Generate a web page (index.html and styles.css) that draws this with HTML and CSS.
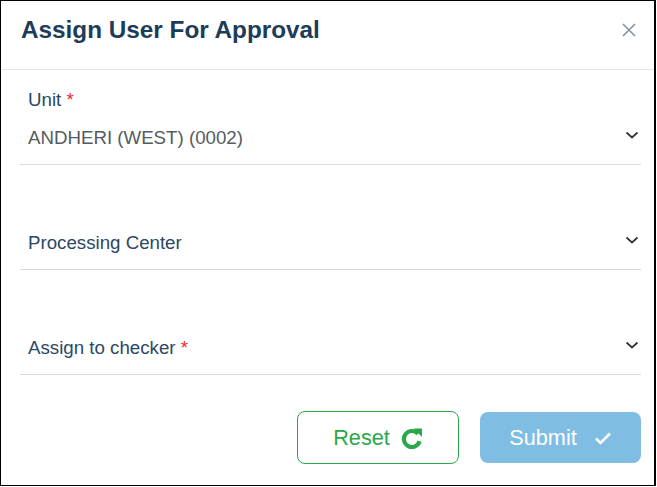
FILE: index.html
```html
<!DOCTYPE html>
<html>
<head>
<meta charset="utf-8">
<link rel="stylesheet" href="styles.css">
</head>
<body>
<div class="dialog">
  <div class="header">
    <h1 class="title">Assign User For Approval</h1>
    <button class="close" aria-label="Close">
      <svg width="16" height="16" viewBox="0 0 16 16"><path d="M2 2 L14 14 M14 2 L2 14" stroke="#8593a0" stroke-width="1.6" fill="none"/></svg>
    </button>
  </div>
  <div class="body">
    <div class="field">
      <div class="label">Unit <span class="req">*</span></div>
      <div class="row">
        <span class="value">ANDHERI (WEST) (0002)</span>
        <svg class="chev" width="14" height="10" viewBox="0 0 14 10"><path d="M1.5 2.5 L7 7.5 L12.5 2.5" stroke="#333" stroke-width="1.7" fill="none"/></svg>
      </div>
    </div>
    <div class="field">
      <div class="row">
        <span class="label">Processing Center</span>
        <svg class="chev" width="14" height="10" viewBox="0 0 14 10"><path d="M1.5 2.5 L7 7.5 L12.5 2.5" stroke="#333" stroke-width="1.7" fill="none"/></svg>
      </div>
    </div>
    <div class="field">
      <div class="row">
        <span class="label">Assign to checker <span class="req">*</span></span>
        <svg class="chev" width="14" height="10" viewBox="0 0 14 10"><path d="M1.5 2.5 L7 7.5 L12.5 2.5" stroke="#333" stroke-width="1.7" fill="none"/></svg>
      </div>
    </div>
  </div>
  <div class="footer">
    <button class="btn reset">Reset
      <svg width="22" height="22" viewBox="0 0 22 22"><path d="M17 6.8 A8 8 0 1 0 18.6 14.2" stroke="#2aa84a" stroke-width="4.2" fill="none"/><path d="M12.5 1.5 L21 1.5 L21 10 Z" fill="#2aa84a"/></svg>
    </button>
    <button class="btn submit">Submit
      <svg width="18" height="14" viewBox="0 0 18 14"><path d="M2 7.5 L6.5 12 L16 2.5" stroke="#fff" stroke-width="2.6" fill="none"/></svg>
    </button>
  </div>
</div>
</body>
</html>
```
FILE: styles.css
```css
html, body {
  margin: 0;
  padding: 0;
  background: #fff;
}
body {
  font-family: "Liberation Sans", Arial, sans-serif;
}
.dialog {
  box-sizing: border-box;
  width: 656px;
  height: 486px;
  border: 1px solid #000;
  border-right-width: 2px;
  display: flex;
  flex-direction: column;
}
.header {
  height: 68px;
  border-bottom: 1px solid #e4e6ec;
  display: flex;
  align-items: center;
  justify-content: space-between;
  padding: 0 17px 0 20px;
}
.title {
  margin: 0;
  font-size: 24.3px;
  font-weight: bold;
  color: #1d3c58;
  position: relative;
  top: -5px;
}
.close {
  border: 0;
  background: none;
  padding: 0;
  width: 16px;
  height: 16px;
  position: relative;
  top: -5px;
}
.body {
  padding: 0 13px 0 19px;
  display: flex;
  flex-direction: column;
  gap: 10px;
}
.field {
  height: 94px;
  border-bottom: 1px solid #d5dce3;
  display: flex;
  flex-direction: column;
  justify-content: flex-end;
}
.label {
  font-size: 18.7px;
  color: #2b4865;
  line-height: 20px;
  padding-left: 8px;
}
.field > .label {
  margin-bottom: 3px;
}
.row .label {
  padding-left: 0;
}
.req {
  color: #f0282d;
}
.row {
  height: 50px;
  display: flex;
  align-items: center;
  justify-content: space-between;
  padding: 0 2px 1px 8px;
}
.value {
  font-size: 18.7px;
  color: #555b61;
}
.chev {
  display: block;
  margin-top: -6px;
}
.footer {
  display: flex;
  justify-content: flex-end;
  gap: 21px;
  padding: 36px 13px 0 0;
}
.btn {
  box-sizing: border-box;
  height: 53px;
  width: 162px;
  border-radius: 8px;
  font-family: "Liberation Sans", Arial, sans-serif;
  font-size: 21.7px;
  display: flex;
  align-items: center;
  justify-content: center;
  gap: 11px;
  padding: 0;
}
.reset {
  background: #fff;
  border: 1px solid #2aa84a;
  color: #2aa84a;
}
.submit {
  background: #80bde3;
  border: 0;
  color: #fff;
  height: 51px;
  margin-top: 1px;
  width: 161px;
  gap: 17px;
}
```
